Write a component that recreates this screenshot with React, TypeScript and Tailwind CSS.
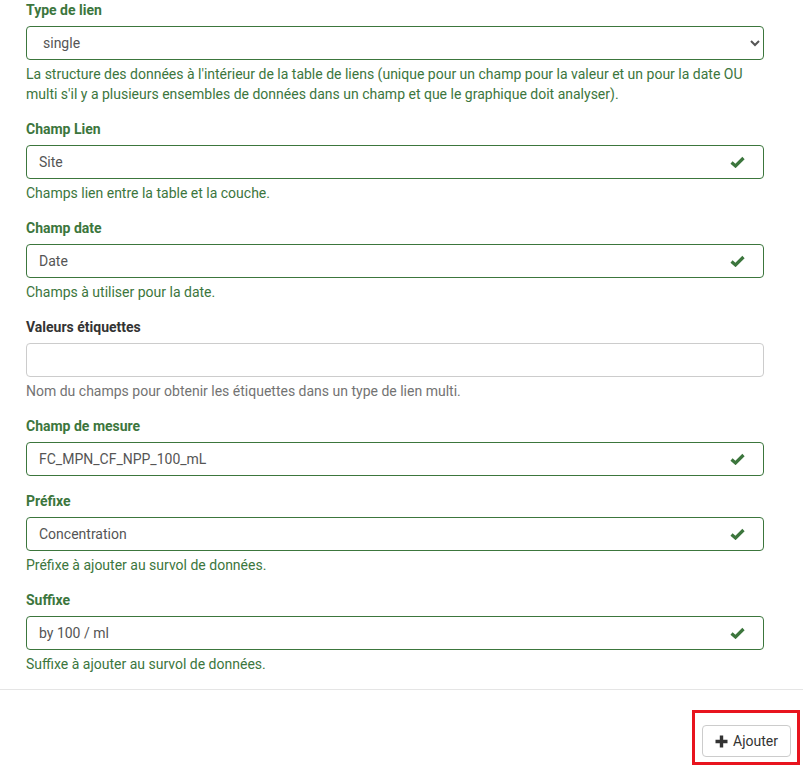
import React from 'react';

type Field = {
  label: string;
  value: string;
  help?: string;
  valid: boolean;
};

const fields: Field[] = [
  { label: 'Champ Lien', value: 'Site', help: 'Champs lien entre la table et la couche.', valid: true },
  { label: 'Champ date', value: 'Date', help: 'Champs à utiliser pour la date.', valid: true },
  { label: 'Valeurs étiquettes', value: '', help: "Nom du champs pour obtenir les étiquettes dans un type de lien multi.", valid: false },
  { label: 'Champ de mesure', value: 'FC_MPN_CF_NPP_100_mL', valid: true },
  { label: 'Préfixe', value: 'Concentration', help: 'Préfixe à ajouter au survol de données.', valid: true },
  { label: 'Suffixe', value: 'by 100 / ml', help: 'Suffixe à ajouter au survol de données.', valid: true },
];

const Check = () => (
  <svg width="15" height="12" viewBox="0 0 15 12" className="absolute right-[19px] top-[11px]">
    <path d="M1.5 6.5 L5.5 10 L13.5 2" fill="none" stroke="#3c763d" strokeWidth="3.2" />
  </svg>
);

const Plus = () => (
  <svg width="13" height="13" viewBox="0 0 13 13">
    <path d="M6.5 0.5 V12.5 M0.5 6.5 H12.5" stroke="#333" strokeWidth="3.4" />
  </svg>
);

const FormField: React.FC<{ f: Field }> = ({ f }) => (
  <div className="mb-[15px]">
    <label className={`block font-bold leading-5 mb-[6px] ${f.valid ? 'text-[#3c763d]' : 'text-[#333]'}`}>{f.label}</label>
    <div className="relative">
      <div
        className={`h-[34px] rounded border px-3 flex items-center text-[#555] ${f.valid ? 'border-[#3c763d]' : 'border-[#ccc]'}`}
      >
        {f.value}
      </div>
      {f.valid && <Check />}
    </div>
    {f.help && (
      <p className={`mt-[4px] leading-5 ${f.valid ? 'text-[#3c763d]' : 'text-[#737373]'}`}>{f.help}</p>
    )}
  </div>
);

const App: React.FC = () => {
  return (
    <div className="w-[803px] h-[766px] overflow-hidden bg-white text-[14px] text-[#333]" style={{ fontFamily: 'Roboto, "Liberation Sans", sans-serif' }}>
      <div className="pl-[26px] pr-[39px]">
        {/* Type de lien */}
        <div className="mb-[15px]">
          <label className="block font-bold leading-5 mb-[6px] text-[#3c763d]">Type de lien</label>
          <select
            defaultValue="single"
            className="w-full h-[34px] rounded border border-[#3c763d] pl-[12px] pr-2 text-[#555] bg-white"
          >
            <option value="single">single</option>
            <option value="multi">multi</option>
          </select>
          <p className="mt-[4px] leading-5 text-[#3c763d]">
            La structure des données à l'intérieur de la table de liens (unique pour un champ pour la valeur et un pour la date OU multi s'il y a plusieurs ensembles de données dans un champ et que le graphique doit analyser).
          </p>
        </div>

        {fields.map((f) => (
          <FormField key={f.label} f={f} />
        ))}
      </div>

      <div className="border-t border-[#e5e5e5]" />

      <div className="flex justify-end pt-[20px] pr-[3px]">
        <div className="border-[3px] border-[#e8141e] pt-[12px] pb-[5px] pl-[7px] pr-[6px]">
          <button className="flex items-center gap-[5px] h-[32px] px-[12px] rounded border border-[#ccc] bg-white text-[#333]">
            <Plus />
            <span>Ajouter</span>
          </button>
        </div>
      </div>
    </div>
  );
};

export default App;
